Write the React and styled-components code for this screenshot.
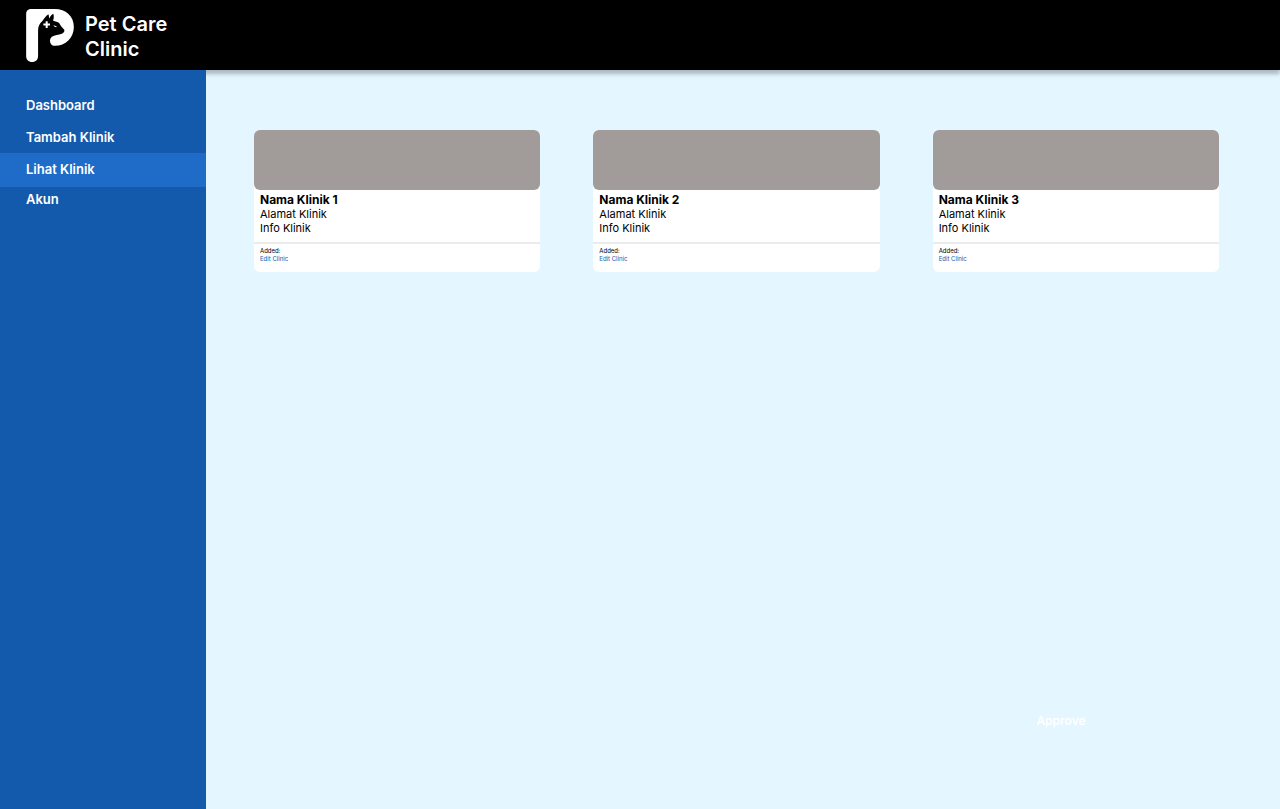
import React from "react";
import styled, { createGlobalStyle } from "styled-components";

const GlobalStyle = createGlobalStyle`
  * { box-sizing: border-box; }
  body {
    margin: 0;
    font-family: Inter, "Liberation Sans", sans-serif;
    color: #000;
    background: #e4f6ff;
  }
`;

const Page = styled.div`
  min-height: 100vh;
  display: flex;
  flex-direction: column;
`;

const Header = styled.header`
  position: relative;
  height: 70px;
  padding: 9px 26px 0;
  display: flex;
  align-items: flex-start;
  gap: 11px;
  background: #000;
  box-shadow: 0 4px 4px rgba(0, 0, 0, 0.25);
`;

const Logo = styled.svg`
  width: 48px;
  height: 53px;
  flex: none;
`;

const Brand = styled.div`
  width: 100px;
  margin-top: 3px;
  color: #fff;
  font-size: 20px;
  font-weight: 600;
  line-height: 25px;
`;

const Body = styled.div`
  flex: 1;
  display: flex;
`;

const Sidebar = styled.nav`
  position: relative;
  flex: none;
  width: 206px;
  padding-top: 19px;
  display: flex;
  flex-direction: column;
  background: #145aac;
`;

const NavLink = styled.a`
  padding: ${(p) => (p.$compact ? "0 26px 8px" : p.$active ? "4px 26px 6px" : "4px 26px")};
  color: #fff;
  font-size: 13px;
  font-weight: 600;
  line-height: 24px;
  text-decoration: none;
  background: ${(p) => (p.$active ? "#1e6bc8" : "transparent")};
`;

const Main = styled.main`
  flex: 1;
  padding: 60px 61px 77px 48px;
  display: flex;
  flex-direction: column;
  justify-content: space-between;
`;

const CardGrid = styled.div`
  display: grid;
  grid-template-columns: repeat(3, 1fr);
  align-items: start;
  gap: 53px;
`;

const Card = styled.article`
  border-radius: 6px;
  background: #fff;
`;

const Photo = styled.div`
  height: 60px;
  border-radius: 6px;
  background: #a19b9a;
`;

const Info = styled.div`
  height: 54px;
  padding: 2px 6px 0;
  border-bottom: 2px solid #ebebeb;
`;

const ClinicName = styled.h2`
  margin: 0;
  font-size: 12px;
  font-weight: 700;
  line-height: 15px;
`;

const Detail = styled.p`
  margin: 0;
  font-size: 11px;
  line-height: 14px;
`;

const CardFooter = styled.footer`
  height: 28px;
  padding: 3px 6px 0;
  display: flex;
  flex-direction: column;
  align-items: flex-start;
  font-size: 6px;
  line-height: 8px;
`;

const EditLink = styled.a`
  color: #145aac;
  text-decoration: none;
`;

const Actions = styled.div`
  display: flex;
  justify-content: flex-end;
  padding-right: 62px;
`;

const ApproveButton = styled.button`
  width: 192px;
  height: 24px;
  padding: 0;
  border: 0;
  background: transparent;
  color: #fff;
  font-family: inherit;
  font-size: 12px;
  font-weight: 600;
`;

const navItems = [
  { label: "Dashboard" },
  { label: "Tambah Klinik" },
  { label: "Lihat Klinik", active: true },
  { label: "Akun", compact: true },
];

const clinics = ["Nama Klinik 1", "Nama Klinik 2", "Nama Klinik 3"];

function PetLogo() {
  return (
    <Logo viewBox="30 27 144 160" aria-hidden="true">
      <path
        fill="#fff"
        d="M46 27H116C150 27 174 49 174 81C174 114 149 138 117 138C107 138 102 131 102 121C103 112 110 108 119 106C129 104 138 104 142 99C146 95 147 90 143 87C137 82 134 76 130 70C126 66 118 65 111 62C114 55 114 48 112 41C105 45 102 51 99 56C99 51 99 47 97 43C89 49 84 56 79 63C70 70 66 80 66 92V168C66 180 59 187 48 187C37 187 30 180 30 168V43C30 32 36 27 46 27Z"
      />
      <path fill="#fff" d="M89 64H95V71H102V77H95V84H89V77H82V71H89Z" />
      <path fill="#fff" d="M112 76L122 79L121 82L115 80Z" />
    </Logo>
  );
}

function ClinicCard({ name }) {
  return (
    <Card>
      <Photo />
      <Info>
        <ClinicName>{name}</ClinicName>
        <Detail>Alamat Klinik</Detail>
        <Detail>Info Klinik</Detail>
      </Info>
      <CardFooter>
        <span>Added:</span>
        <EditLink href="#edit">Edit Clinic</EditLink>
      </CardFooter>
    </Card>
  );
}

export default function App() {
  return (
    <Page>
      <GlobalStyle />
      <Header>
        <PetLogo />
        <Brand>Pet Care Clinic</Brand>
      </Header>
      <Body>
        <Sidebar>
          {navItems.map((item) => (
            <NavLink
              key={item.label}
              href="#"
              $active={item.active}
              $compact={item.compact}
              aria-current={item.active ? "page" : undefined}
            >
              {item.label}
            </NavLink>
          ))}
        </Sidebar>
        <Main>
          <CardGrid>
            {clinics.map((name) => (
              <ClinicCard key={name} name={name} />
            ))}
          </CardGrid>
          <Actions>
            <ApproveButton type="button">Approve</ApproveButton>
          </Actions>
        </Main>
      </Body>
    </Page>
  );
}
